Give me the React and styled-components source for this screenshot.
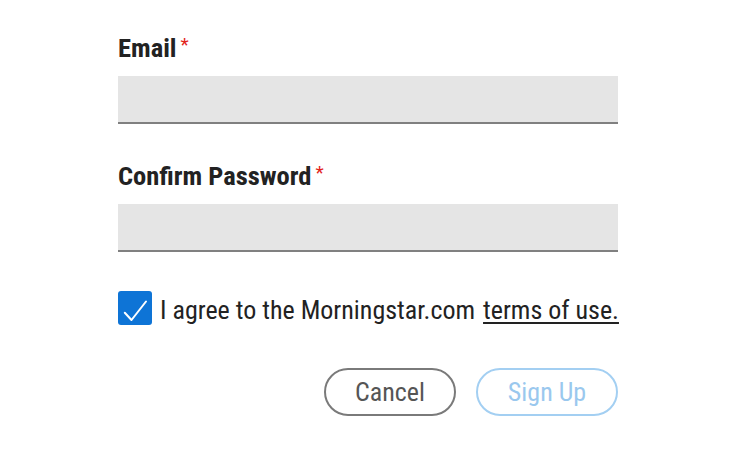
import React, { useState } from 'react';
import styled, { createGlobalStyle } from 'styled-components';

const GlobalStyle = createGlobalStyle`
  html, body {
    margin: 0;
    padding: 0;
    background: #fff;
  }
  body {
    font-family: Roboto, "Liberation Sans", sans-serif;
    font-stretch: condensed;
    color: #222;
  }
`;

const Form = styled.form`
  width: 500px;
  margin: 0 auto;
  padding-top: 32px;
  display: flex;
  flex-direction: column;
`;

const Field = styled.div`
  display: flex;
  flex-direction: column;
  margin-bottom: ${(p) => p.$gap || 0}px;
`;

const Label = styled.label`
  font-size: 26.5px;
  line-height: 32px;
  height: 32px;
  font-weight: 700;
  color: #222;
  margin-bottom: 12px;
`;

const Required = styled.span`
  color: #e2231a;
  font-weight: 400;
  font-size: 19px;
  line-height: 0;
  vertical-align: 6px;
  margin-left: 4px;
`;

const Input = styled.input`
  box-sizing: border-box;
  height: 48px;
  width: 100%;
  border: 0;
  border-radius: 0;
  border-bottom: 2px solid #808080;
  background: #e5e5e5;
  padding: 0 12px;
  font: inherit;
  font-size: 24px;
  outline: none;
`;

const Agree = styled.label`
  display: flex;
  align-items: flex-start;
  margin-top: 39px;
  cursor: pointer;
`;

const AgreeText = styled.span`
  font-size: 26px;
  line-height: 34px;
  padding-top: 2px;
  color: #222;
  white-space: nowrap;
`;

const Box = styled.span`
  flex: none;
  width: 34px;
  height: 34px;
  border-radius: 3px;
  background: ${(p) => (p.$checked ? '#0e74d6' : '#fff')};
  border: ${(p) => (p.$checked ? 'none' : '2px solid #808080')};
  box-sizing: border-box;
  margin-right: 8px;
  display: flex;
`;

const Terms = styled.a`
  color: #222;
  text-decoration: underline;
  text-decoration-thickness: 2px;
  text-underline-offset: 3px;
  margin-left: 2px;
`;

const Actions = styled.div`
  display: flex;
  justify-content: flex-end;
  gap: 20px;
  margin-top: 41px;
`;

const Button = styled.button`
  box-sizing: border-box;
  height: 48px;
  width: ${(p) => p.$width}px;
  border-radius: 24px;
  background: #fff;
  border: 2px solid ${(p) => (p.$primary ? '#a3cff2' : '#7a7a7a')};
  color: ${(p) => (p.$primary ? '#9ac8ee' : '#555')};
  font-family: inherit;
  font-stretch: condensed;
  font-size: 26px;
  line-height: 1;
  padding: 0;
  cursor: pointer;
`;

function Check() {
  return (
    <svg width="34" height="34" viewBox="0 0 34 34">
      <path d="M6.8 21.8 L13.5 29 L28 10.5" fill="none" stroke="#fff" strokeWidth="2" strokeLinecap="round" strokeLinejoin="round" />
    </svg>
  );
}

export default function App() {
  const [agreed, setAgreed] = useState(true);

  return (
    <>
      <GlobalStyle />
      <Form onSubmit={(e) => e.preventDefault()}>
        <Field $gap={36}>
          <Label htmlFor="email">Email<Required>*</Required></Label>
          <Input id="email" type="email" />
        </Field>
        <Field>
          <Label htmlFor="confirm">Confirm Password<Required>*</Required></Label>
          <Input id="confirm" type="password" />
        </Field>
        <Agree onClick={() => setAgreed(!agreed)}>
          <Box $checked={agreed}>{agreed && <Check />}</Box>
          <AgreeText>
            I agree to the Morningstar.com{' '}
            <Terms href="#" onClick={(e) => e.preventDefault()}>terms of use.</Terms>
          </AgreeText>
        </Agree>
        <Actions>
          <Button type="button" $width={132}>Cancel</Button>
          <Button type="submit" $width={142} $primary disabled>Sign Up</Button>
        </Actions>
      </Form>
    </>
  );
}
